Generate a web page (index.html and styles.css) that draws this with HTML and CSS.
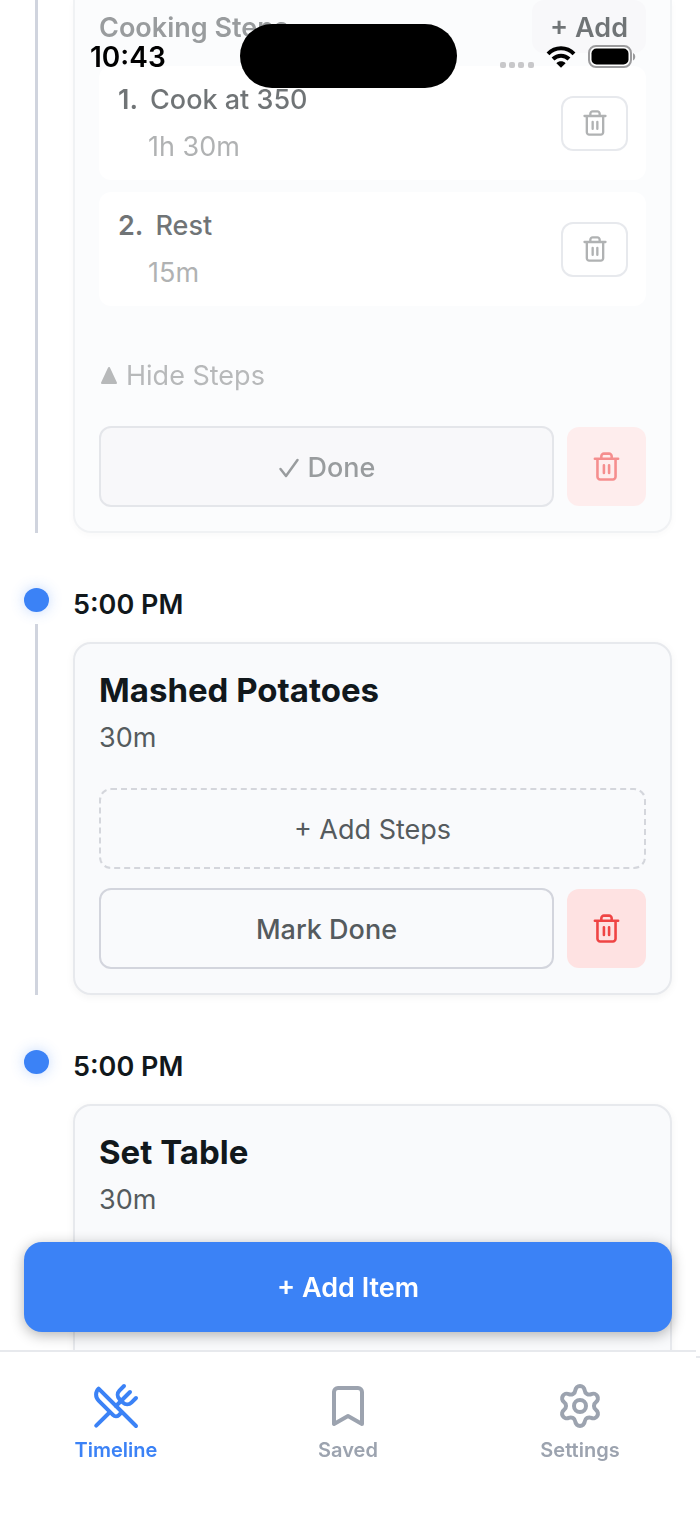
FILE: index.html
```html
<!DOCTYPE html>
<html lang="en">
<head>
<meta charset="utf-8">
<meta name="viewport" content="width=device-width, initial-scale=1">
<title>Timeline</title>
<link rel="stylesheet" href="styles.css">
</head>
<body>
<svg class="sprite" aria-hidden="true">
  <symbol id="trash" viewBox="0 0 24 24">
    <path d="M3 6h18M19 6v14c0 1-1 2-2 2H7c-1 0-2-1-2-2V6M8 6V4c0-1 1-2 2-2h4c1 0 2 1 2 2v2M10 11v6M14 11v6"/>
  </symbol>
</svg>

<header class="status">
  <span class="status-time">10:43</span>
  <span class="island"></span>
  <span class="status-icons">
    <svg class="signal" viewBox="0 0 34 6" aria-hidden="true">
      <rect x="0" width="6" height="6" rx="2"/><rect x="9" width="6" height="6" rx="2"/><rect x="18" width="6" height="6" rx="2"/><rect x="28" width="6" height="6" rx="2"/>
    </svg>
    <svg class="wifi" viewBox="0 0 30 22" aria-hidden="true">
      <path class="arc" d="M2 7.800C9.200.5 20.800.5 28 7.800M7 13c4.600-4.500 11.400-4.500 16 0"/>
      <path d="M15 21.800 10.400 17.200c2.600-2.500 6.600-2.500 9.200 0z"/>
    </svg>
    <svg class="battery" viewBox="0 0 48 24" aria-hidden="true">
      <rect class="shell" x="1" y="1" width="42" height="21" rx="7"/>
      <rect x="3.500" y="3.500" width="37" height="16" rx="5"/>
      <path class="nub" d="M45 8c3 1.500 3 6 0 7.500z"/>
    </svg>
  </span>
</header>

<main class="timeline">
  <section class="entry">
    <div class="rail"><span class="line"></span></div>
    <article class="card card-done">
      <div class="steps-head">
        <h3 class="steps-title">Cooking Steps</h3>
        <button class="add-step" type="button">+ Add</button>
      </div>
      <ol class="steps">
        <li class="step">
          <div>
            <p class="step-name"><span class="step-number">1.</span><span>Cook at 350</span></p>
            <p class="step-time">1h 30m</p>
          </div>
          <button class="step-delete" type="button" aria-label="Delete step 1"><svg class="icon icon-small"><use href="#trash"/></svg></button>
        </li>
        <li class="step">
          <div>
            <p class="step-name"><span class="step-number">2.</span><span>Rest</span></p>
            <p class="step-time">15m</p>
          </div>
          <button class="step-delete" type="button" aria-label="Delete step 2"><svg class="icon icon-small"><use href="#trash"/></svg></button>
        </li>
      </ol>
      <button class="toggle" type="button">
        <svg class="triangle" viewBox="0 0 20 20" aria-hidden="true"><path d="M10 2 17 17H3z"/></svg>
        Hide Steps
      </button>
      <div class="actions">
        <button class="mark is-done" type="button">
          <svg class="check" viewBox="0 0 22 22" aria-hidden="true"><path d="m2.500 12 5.500 7L19.500 3"/></svg>
          Done
        </button>
        <button class="delete" type="button" aria-label="Delete item"><svg class="icon"><use href="#trash"/></svg></button>
      </div>
    </article>
  </section>

  <section class="entry">
    <div class="rail"><span class="dot"></span><span class="line"></span></div>
    <div class="entry-body">
      <time class="time">5:00 PM</time>
      <article class="card">
        <h2 class="title">Mashed Potatoes</h2>
        <p class="duration">30m</p>
        <button class="add-steps" type="button">+ Add Steps</button>
        <div class="actions">
          <button class="mark" type="button">Mark Done</button>
          <button class="delete" type="button" aria-label="Delete Mashed Potatoes"><svg class="icon"><use href="#trash"/></svg></button>
        </div>
      </article>
    </div>
  </section>

  <section class="entry">
    <div class="rail"><span class="dot"></span></div>
    <div class="entry-body">
      <time class="time">5:00 PM</time>
      <article class="card card-last">
        <h2 class="title">Set Table</h2>
        <p class="duration">30m</p>
      </article>
    </div>
  </section>
</main>

<div class="dock">
  <div class="fab-row"><button class="fab" type="button">+ Add Item</button></div>
  <nav class="tabs">
    <a class="tab tab-active" href="#timeline">
      <svg class="tab-icon" viewBox="0 0 24 24" aria-hidden="true"><path d="m16 2-2.300 2.300a3 3 0 0 0 0 4.200l1.800 1.800a3 3 0 0 0 4.200 0L22 8"/><path d="M15 15 3.300 3.300a4.200 4.200 0 0 0 0 6l7.300 7.300c.7.7 2 .7 2.800 0L15 15Zm0 0 7 7"/><path d="m2.100 21.800 6.400-6.300M19 5l-7 7"/></svg>
      <span>Timeline</span>
    </a>
    <a class="tab" href="#saved">
      <svg class="tab-icon" viewBox="0 0 24 24" aria-hidden="true"><path d="m19 21-7-4-7 4V5a2 2 0 0 1 2-2h10a2 2 0 0 1 2 2v16z"/></svg>
      <span>Saved</span>
    </a>
    <a class="tab" href="#settings">
      <svg class="tab-icon" viewBox="0 0 24 24" aria-hidden="true"><path d="M9.671 4.136a2.340 2.340 0 0 1 4.659 0 2.340 2.340 0 0 0 3.319 1.915 2.340 2.340 0 0 1 2.330 4.033 2.340 2.340 0 0 0 0 3.831 2.340 2.340 0 0 1-2.330 4.033 2.340 2.340 0 0 0-3.319 1.915 2.340 2.340 0 0 1-4.659 0 2.340 2.340 0 0 0-3.320-1.915 2.340 2.340 0 0 1-2.330-4.033 2.340 2.340 0 0 0 0-3.831A2.340 2.340 0 0 1 6.350 6.051a2.340 2.340 0 0 0 3.319-1.915"/><circle cx="12" cy="12" r="3"/></svg>
      <span>Settings</span>
    </a>
  </nav>
</div>
</body>
</html>
```

FILE: styles.css
```css
* {
  box-sizing: border-box;
}

body {
  margin: 0;
  padding-right: 4px;
  height: 100vh;
  overflow: hidden;
  background: #fff;
  color: #11181c;
  font-family: Inter, "Liberation Sans", sans-serif;
  font-size: 27px;
  line-height: 34px;
}

h2, h3, p, ol {
  margin: 0;
  padding: 0;
}

button {
  margin: 0;
  padding: 0;
  border: 0;
  background: none;
  color: inherit;
  font: inherit;
}

svg {
  display: block;
}

.sprite {
  display: none;
}

/* Status bar floats over the scrolled list */
.status {
  position: fixed;
  z-index: 3;
  top: 24px;
  left: 0;
  right: 4px;
  display: grid;
  grid-template-columns: 1fr 217px 1fr;
  align-items: center;
  color: #000;
}

.status-time {
  padding: 2px 0 0 90px;
  font-size: 28px;
  font-weight: 600;
}

.island {
  height: 64px;
  border-radius: 32px;
  background: #000;
}

.status-icons {
  display: flex;
  justify-content: flex-end;
  align-items: center;
  gap: 12px;
  padding: 2px 60px 0 0;
}

.signal {
  width: 34px;
  height: 6px;
  margin-top: 15px;
  fill: #c8c8ca;
}

.wifi {
  width: 30px;
  height: 22px;
}

.arc {
  fill: none;
  stroke: #000;
  stroke-width: 4;
}

.battery {
  width: 48px;
  height: 24px;
}

.shell {
  fill: #fff;
  stroke: #9b9b9d;
  stroke-width: 2;
}

.nub {
  fill: #9b9b9d;
}

/* Timeline */
.timeline {
  display: flex;
  flex-direction: column;
  gap: 55px;
  padding: 0 24px;
}

.entry {
  display: grid;
  grid-template-columns: 25px 1fr;
  gap: 24px;
}

.rail {
  display: flex;
  flex-direction: column;
  align-items: center;
  gap: 12px;
}

.dot {
  width: 25px;
  height: 24px;
  border-radius: 50%;
  background: #3b82f6;
  box-shadow: 0 0 14px rgba(59, 130, 246, 0.3);
}

.line {
  flex: 1;
  width: 3px;
  background: #d0d4de;
}

.time {
  display: block;
  margin-bottom: 22px;
  padding-top: 1px;
  font-weight: 600;
  line-height: 31px;
}

.card {
  display: flex;
  flex-direction: column;
  padding: 24px;
  border: 2px solid #e7e9ed;
  border-radius: 18px;
  background: #f9fafc;
  box-shadow: 0 2px 8px rgba(0, 0, 0, 0.05);
}

.card-done {
  padding-top: 0;
  border-top: 0;
  border-radius: 0 0 18px 18px;
  opacity: 0.6;
}

.card-last {
  min-height: 353px;
}

.title {
  font-size: 33px;
  font-weight: 700;
  line-height: 44px;
}

.duration {
  margin: 9px 0 33px;
  color: #555b5e;
}

.add-steps {
  height: 81px;
  margin-bottom: 19px;
  padding-top: 2px;
  border: 2px dashed #d4d6dc;
  border-radius: 12px;
  color: #555b5e;
}

.actions {
  display: flex;
  align-items: center;
  gap: 13px;
}

.mark {
  display: flex;
  flex: 1;
  align-items: center;
  justify-content: center;
  gap: 8px;
  height: 81px;
  padding-top: 2px;
  border: 2px solid #d3d5dd;
  border-radius: 12px;
  color: #555b5e;
  font-weight: 500;
}

.is-done {
  background: #f3f4f7;
}

.check {
  width: 22px;
  height: 22px;
  fill: none;
  stroke: currentColor;
  stroke-width: 2.5;
  stroke-linecap: round;
  stroke-linejoin: round;
}

.delete {
  display: grid;
  place-items: center;
  width: 79px;
  height: 79px;
  border-radius: 12px;
  background: #fee2e2;
  color: #ef4444;
}

.icon {
  width: 31px;
  height: 31px;
  fill: none;
  stroke: currentColor;
  stroke-width: 2;
  stroke-linecap: round;
  stroke-linejoin: round;
}

.icon-small {
  width: 28px;
  height: 28px;
}

.steps-head {
  display: flex;
  align-items: center;
  justify-content: space-between;
  margin-bottom: 13px;
}

.steps-title {
  padding-top: 2px;
  color: #555b5e;
  font-size: 27px;
  font-weight: 600;
}

.add-step {
  height: 53px;
  padding: 3px 18px 0;
  border-radius: 12px;
  background: #f3f4f7;
  font-weight: 600;
}

.steps {
  display: grid;
  gap: 12px;
  list-style: none;
}

.step {
  display: flex;
  align-items: center;
  justify-content: space-between;
  height: 114px;
  padding: 0 18px 0 19px;
  border-radius: 12px;
  background: #fff;
}

.step-name {
  display: flex;
  gap: 12px;
  margin-bottom: 13px;
  padding-top: 1px;
  font-weight: 500;
}

.step-number {
  font-weight: 600;
}

.step-time {
  padding-left: 30px;
  color: #7c7f80;
}

.step-delete {
  display: grid;
  place-items: center;
  width: 67px;
  height: 55px;
  border: 2px solid #d8dbe2;
  border-radius: 12px;
  color: #7c7f80;
}

.toggle {
  display: flex;
  align-items: center;
  align-self: flex-start;
  gap: 7px;
  margin: 53px 0 33px;
  color: #888b8d;
}

.triangle {
  width: 20px;
  height: 20px;
  fill: currentColor;
  stroke: currentColor;
  stroke-width: 2;
  stroke-linejoin: round;
}

/* Bottom dock: add button over the list, tabs below */
.dock {
  position: fixed;
  z-index: 2;
  right: 4px;
  bottom: 0;
  left: 0;
}

.fab-row {
  padding: 0 24px 18px;
}

.fab {
  width: 100%;
  height: 90px;
  padding-top: 2px;
  border-radius: 18px;
  background: #3b82f6;
  box-shadow: 0 3px 14px rgba(0, 0, 0, 0.3);
  color: #fff;
  font-weight: 600;
}

.tabs {
  position: relative;
  display: grid;
  grid-template-columns: repeat(3, 1fr);
  height: 165px;
  padding-top: 30px;
  border-top: 2px solid #e7e9ed;
  background: #fff;
}

/* Short edge mark beside the tab bar */
.tabs::after {
  content: "";
  position: absolute;
  top: 4px;
  left: 100%;
  width: 4px;
  height: 2px;
  background: #e7e9ed;
}

.tab {
  display: flex;
  flex-direction: column;
  align-items: center;
  gap: 7px;
  color: #9ca3af;
  font-size: 20px;
  font-weight: 600;
  line-height: 26px;
  text-decoration: none;
}

.tab-active {
  color: #3b82f6;
}

.tab-icon {
  width: 48px;
  height: 48px;
  fill: none;
  stroke: currentColor;
  stroke-width: 2;
  stroke-linecap: round;
  stroke-linejoin: round;
}
```
